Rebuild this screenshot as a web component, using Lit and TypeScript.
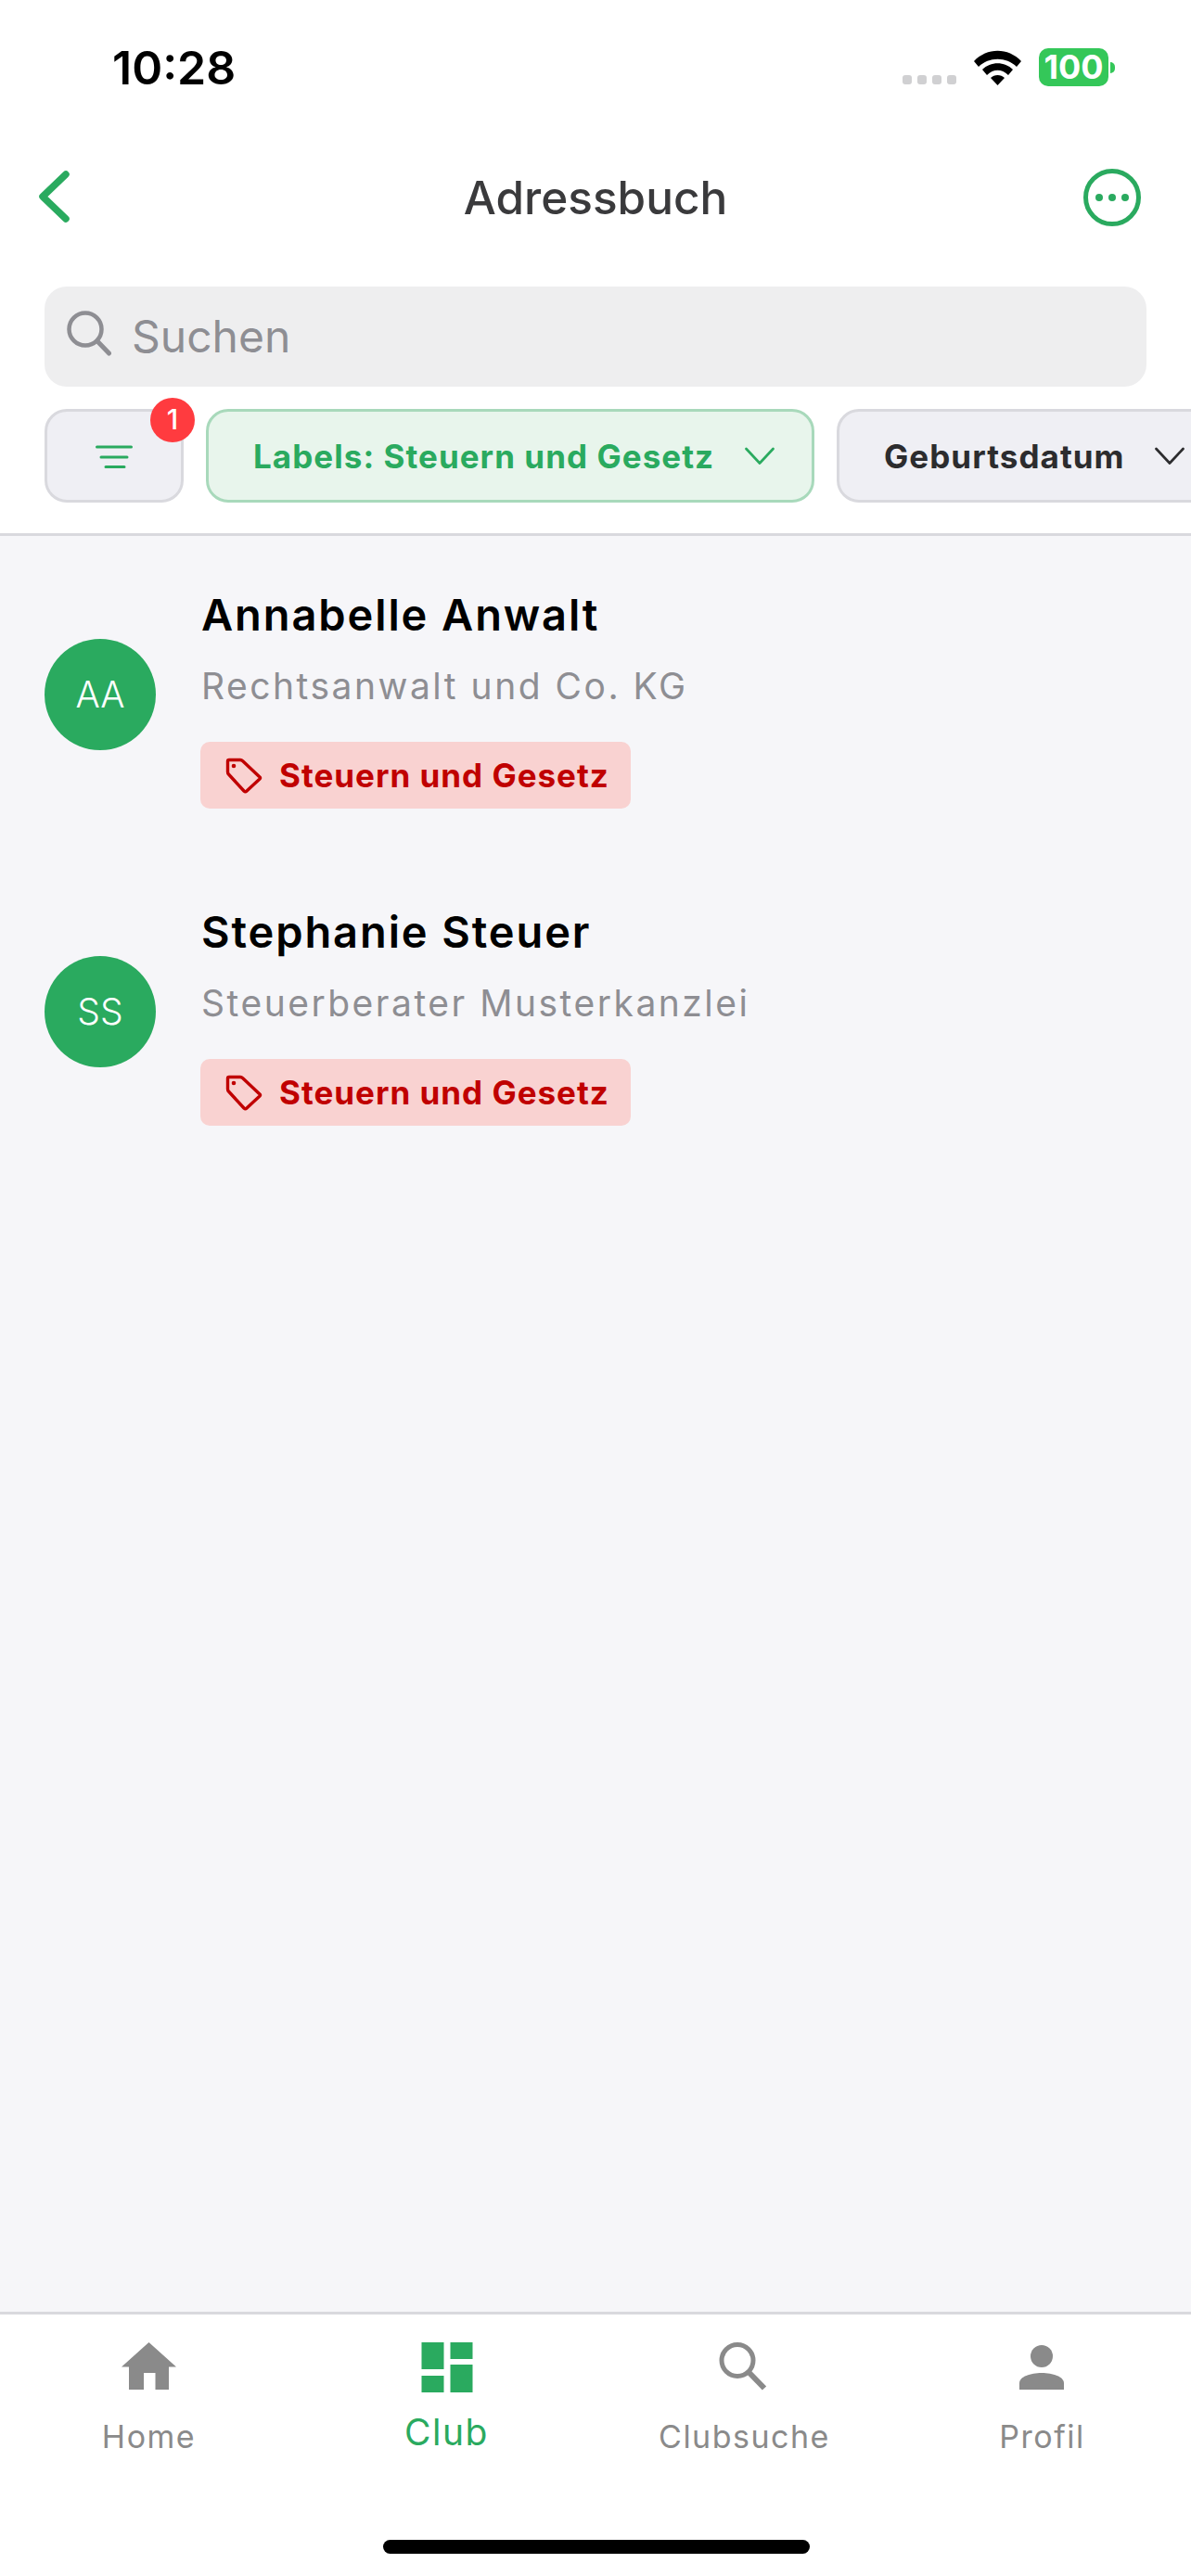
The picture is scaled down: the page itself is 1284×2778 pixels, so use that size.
import { LitElement, html, css, svg } from 'lit';
import { customElement } from 'lit/decorators.js';

const contacts = [
  { initials: 'AA', name: 'Annabelle Anwalt', company: 'Rechtsanwalt und Co. KG', label: 'Steuern und Gesetz' },
  { initials: 'SS', name: 'Stephanie Steuer', company: 'Steuerberater Musterkanzlei', label: 'Steuern und Gesetz' },
];

const chevron = html`<svg class="chev" viewBox="0 0 32 20"><path d="M1.500 2 L16 17.500 L30.500 2" fill="none" stroke="currentColor" stroke-width="2.700" stroke-linecap="round" stroke-linejoin="round"/></svg>`;

const tagIcon = html`<svg class="tag-icon" viewBox="0 0 42 40"><path d="M3.500 5 Q3.500 3.500 5 3.500 H17 Q18.500 3.500 19.500 4.500 L38 22 Q39 23 38 24 L24 37 Q22.500 38.500 21 37 L4.500 19 Q3.500 18 3.500 16.500 Z" fill="none" stroke="#c00000" stroke-width="3.400" stroke-linejoin="round"/><circle cx="10" cy="10" r="2.300" fill="#c00000"/></svg>`;

const tabIcons = {
  home: svg`<path d="M29.500 0 L59 26.500 H51 V51 H36.500 V33 H24 V51 H8 V26.500 H0 Z" fill="currentColor"/>`,
  club: svg`<path d="M2.500 0 H26.500 V29 H2.500 Z M33.500 0 H57.500 V18 H33.500 Z M2.500 36 H26.500 V54 H2.500 Z M33.500 24 H57.500 V54 H33.500 Z" fill="currentColor"/>`,
  search: svg`<circle cx="22" cy="19.500" r="17" fill="none" stroke="currentColor" stroke-width="5"/><path d="M34 32 L51 49.500" stroke="currentColor" stroke-width="6"/>`,
  profile: svg`<circle cx="29" cy="15" r="12" fill="currentColor"/><path d="M5 51 V44 C5 37 17 33 29 33 C41 33 53 37 53 44 V51 Z" fill="currentColor"/>`,
};

const tabs = [
  { key: 'home', label: 'Home' },
  { key: 'club', label: 'Club', active: true },
  { key: 'search', label: 'Clubsuche' },
  { key: 'profile', label: 'Profil' },
];

@customElement('app-root')
export class AppRoot extends LitElement {
  static styles = css`
    :host {
      display: block;
      width: 1284px;
      height: 2778px;
      font-family: Inter, 'Liberation Sans', sans-serif;
      background: #f6f6f9;
      color: #000;
      overflow: hidden;
    }
    .screen {
      display: flex;
      flex-direction: column;
      height: 2778px;
    }
    .top {
      background: #fff;
      border-bottom: 3px solid #d9d9de;
      height: 575px;
      box-sizing: content-box;
      overflow: hidden;
    }
    .status {
      display: flex;
      align-items: flex-start;
      height: 169px;
      padding: 0 82px 0 121px;
    }
    .time {
      font-size: 50px;
      font-weight: 600;
      line-height: 60px;
      margin-top: 43px;
    }
    .status-right {
      margin-left: auto;
      display: flex;
      align-items: flex-start;
      margin-top: 52px;
    }
    .signal {
      display: flex;
      gap: 6px;
      margin-top: 29px;
    }
    .signal i {
      width: 10px;
      height: 10px;
      border-radius: 3px;
      background: #d0d0d2;
    }
    .wifi {
      width: 51px;
      height: 38px;
      margin: 2px 19px 0 19px;
    }
    .battery {
      display: flex;
      align-items: center;
    }
    .battery-body {
      width: 75px;
      height: 41px;
      border-radius: 10px;
      background: #34c759;
      color: #fff;
      font-size: 36px;
      font-weight: 700;
      line-height: 41px;
      text-align: center;
    }
    .battery-nub {
      width: 5px;
      height: 12px;
      margin-left: 2px;
      border-radius: 0 6px 6px 0;
      background: #34c759;
    }
    .nav {
      display: grid;
      grid-template-columns: 1fr auto 1fr;
      align-items: center;
      height: 88px;
      padding: 0 54px;
    }
    .back {
      width: 40px;
      height: 60px;
      margin-left: -16px;
    }
    .title {
      font-size: 49.500px;
      font-weight: 500;
      color: #3a3a3c;
      line-height: 60px;
    }
    .more {
      width: 62px;
      height: 62px;
      justify-self: end;
    }
    .search {
      display: flex;
      align-items: center;
      height: 108px;
      margin: 52px 48px 0;
      padding-left: 24px;
      border-radius: 24px;
      background: #eeeeef;
      gap: 22px;
    }
    .search svg {
      width: 48px;
      height: 50px;
      margin-top: -6px;
    }
    .search span {
      font-size: 48px;
      color: #8e8e93;
      line-height: 60px;
    }
    .filters {
      display: flex;
      gap: 24px;
      margin-top: 24px;
      padding-left: 48px;
    }
    .chip {
      flex: none;
      display: flex;
      align-items: center;
      box-sizing: border-box;
      height: 101px;
      border: 3px solid #d9d9de;
      border-radius: 24px;
      background: #efeff4;
      font-size: 35px;
      font-weight: 700;
      letter-spacing: 1.050px;
      color: #2c2c2e;
      white-space: nowrap;
    }
    .chip-filter {
      position: relative;
      width: 150px;
      justify-content: center;
    }
    .chip-filter svg {
      width: 40px;
      height: 26px;
      margin-top: 3px;
    }
    .badge {
      position: absolute;
      top: -15px;
      right: -15px;
      width: 48px;
      height: 48px;
      border-radius: 50%;
      background: #ff3b3f;
      color: #fff;
      font-size: 30px;
      font-weight: 500;
      line-height: 46px;
      text-align: center;
      letter-spacing: 0;
    }
    .chip-label {
      width: 656px;
      padding-left: 48px;
      gap: 33px;
      border-color: #a8d9bb;
      background: #e8f5ec;
      color: #2aaa5f;
    }
    .chip-date {
      padding-left: 48px;
      gap: 32px;
      width: 420px;
    }
    .chev {
      width: 32px;
      height: 20px;
    }
    .list {
      flex: 1;
      display: flex;
      flex-direction: column;
      gap: 96px;
      padding: 48px 48px 0;
    }
    .row {
      display: flex;
      align-items: center;
      gap: 49px;
    }
    .avatar {
      flex: none;
      width: 120px;
      height: 120px;
      border-radius: 50%;
      background: #2aaa5f;
      color: #fff;
      font-size: 39px;
      font-weight: 300;
      line-height: 120px;
      text-align: center;
    }
    .info {
      display: flex;
      flex-direction: column;
      align-items: flex-start;
    }
    .name {
      font-size: 47px;
      font-weight: 600;
      letter-spacing: 1.900px;
      line-height: 74px;
    }
    .company {
      margin-top: 17px;
      font-size: 39px;
      letter-spacing: 2.500px;
      line-height: 46px;
      color: #8e8e93;
    }
    .tag {
      display: flex;
      align-items: center;
      gap: 17px;
      box-sizing: border-box;
      height: 72px;
      width: 464px;
      margin-top: 37px;
      margin-left: -1px;
      padding-left: 26px;
      border-radius: 10px;
      background: #f9d2d1;
      color: #c00000;
      font-size: 35px;
      font-weight: 700;
      letter-spacing: 1px;
    }
    .tag-icon {
      width: 42px;
      height: 40px;
    }
    .tabbar {
      height: 285px;
      box-sizing: border-box;
      border-top: 3px solid #d9d9de;
      background: #fff;
      position: relative;
    }
    .tabs {
      display: grid;
      grid-template-columns: repeat(4, 321px);
      padding-top: 30px;
    }
    .tab {
      display: flex;
      flex-direction: column;
      align-items: center;
      color: #8a8a8a;
    }
    .tab svg {
      width: 60px;
      height: 54px;
    }
    .tab span {
      margin-top: 27px;
      font-size: 34px;
      letter-spacing: 1.500px;
      line-height: 42px;
    }
    .tab.active {
      color: #2aaa5f;
    }
    .tab.active span {
      margin-top: 19px;
      font-size: 39px;
      line-height: 48px;
    }
    .home-bar {
      position: absolute;
      left: 413px;
      top: 243px;
      width: 460px;
      height: 15px;
      border-radius: 8px;
      background: #000;
    }
  `;

  render() {
    return html`
      <div class="screen">
        <div class="top">
          <div class="status">
            <div class="time">10:28</div>
            <div class="status-right">
              <div class="signal"><i></i><i></i><i></i><i></i></div>
              <svg class="wifi" viewBox="0 0 51 38">
                <path d="M0 12 C14 -3 37 -3 51 12 L46 18 C35 7 16 7 5 18 Z" />
                <path d="M9 21 C18 12 33 12 42 21 L37 27 C30 20 21 20 14 27 Z" />
                <path d="M18 30 C22 26 29 26 33 30 L25.500 38 Z" />
              </svg>
              <div class="battery">
                <div class="battery-body">100</div>
                <div class="battery-nub"></div>
              </div>
            </div>
          </div>
          <div class="nav">
            <svg class="back" viewBox="0 0 40 60">
              <path d="M33 5 L8 29 L33 53" fill="none" stroke="#2aaa5f" stroke-width="7.500" stroke-linecap="round" stroke-linejoin="round"/>
            </svg>
            <div class="title">Adressbuch</div>
            <svg class="more" viewBox="0 0 62 62">
              <circle cx="31" cy="31" r="28.500" fill="none" stroke="#2aaa5f" stroke-width="5"/>
              <circle cx="17" cy="31" r="4" fill="#2aaa5f"/>
              <circle cx="31" cy="31" r="4" fill="#2aaa5f"/>
              <circle cx="45" cy="31" r="4" fill="#2aaa5f"/>
            </svg>
          </div>
          <div class="search">
            <svg viewBox="0 0 48 50">
              <circle cx="20" cy="20" r="17.500" fill="none" stroke="#8e8e93" stroke-width="4.500"/>
              <path d="M33 33 L45.500 46" stroke="#8e8e93" stroke-width="5" stroke-linecap="round"/>
            </svg>
            <span>Suchen</span>
          </div>
          <div class="filters">
            <div class="chip chip-filter">
              <svg viewBox="0 0 40 26">
                <path d="M1.500 2 H38.500 M6 13 H34 M11 23.500 H31" stroke="#2aaa5f" stroke-width="3" stroke-linecap="round"/>
              </svg>
              <div class="badge">1</div>
            </div>
            <div class="chip chip-label"><span>Labels: Steuern und Gesetz</span>${chevron}</div>
            <div class="chip chip-date"><span>Geburtsdatum</span>${chevron}</div>
          </div>
        </div>
        <div class="list">
          ${contacts.map((c) => html`
            <div class="row">
              <div class="avatar">${c.initials}</div>
              <div class="info">
                <div class="name">${c.name}</div>
                <div class="company">${c.company}</div>
                <div class="tag">${tagIcon}<span>${c.label}</span></div>
              </div>
            </div>
          `)}
        </div>
        <div class="tabbar">
          <div class="tabs">
            ${tabs.map((t) => html`
              <div class="tab ${t.active ? 'active' : ''}">
                <svg viewBox="0 0 60 54">${tabIcons[t.key as keyof typeof tabIcons]}</svg>
                <span>${t.label}</span>
              </div>
            `)}
          </div>
          <div class="home-bar"></div>
        </div>
      </div>
    `;
  }
}
